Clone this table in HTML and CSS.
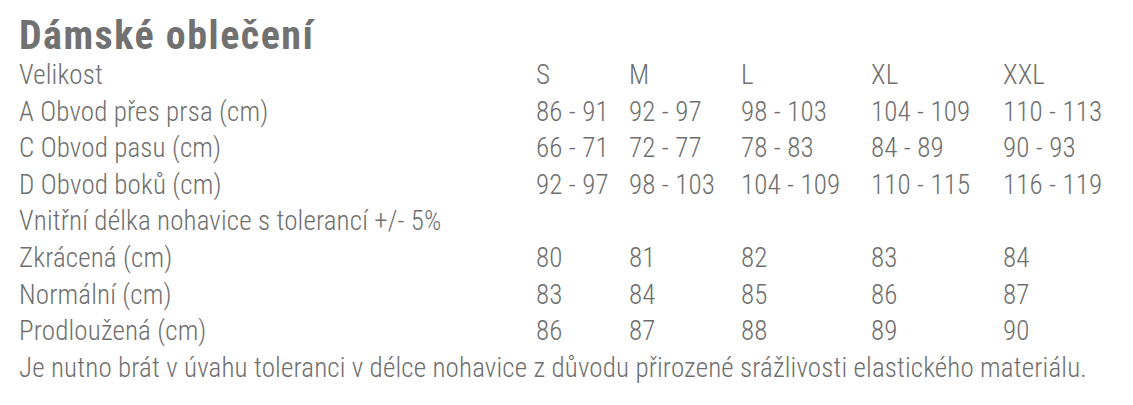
FILE: index.html
```html
<!DOCTYPE html>
<html lang="cs">
<head>
<meta charset="utf-8">
<link rel="stylesheet" href="styles.css">
</head>
<body>
<div class="sheet">
  <h1 class="title">Dámské oblečení</h1>
  <div class="grid">
    <div class="label">Velikost</div><div>S</div><div>M</div><div>L</div><div>XL</div><div>XXL</div>
    <div class="label">A Obvod přes prsa (cm)</div><div>86 - 91</div><div>92 - 97</div><div>98 - 103</div><div>104 - 109</div><div>110 - 113</div>
    <div class="label">C Obvod pasu (cm)</div><div>66 - 71</div><div>72 - 77</div><div>78 - 83</div><div>84 - 89</div><div>90 - 93</div>
    <div class="label">D Obvod boků (cm)</div><div>92 - 97</div><div>98 - 103</div><div>104 - 109</div><div>110 - 115</div><div>116 - 119</div>
    <div class="label full">Vnitřní délka nohavice s tolerancí +/- 5%</div>
    <div class="label">Zkrácená (cm)</div><div>80</div><div>81</div><div>82</div><div>83</div><div>84</div>
    <div class="label">Normální (cm)</div><div>83</div><div>84</div><div>85</div><div>86</div><div>87</div>
    <div class="label">Prodloužená (cm)</div><div>86</div><div>87</div><div>88</div><div>89</div><div>90</div>
    <div class="label full">Je nutno brát v úvahu toleranci v délce nohavice z důvodu přirozené srážlivosti elastického materiálu.</div>
  </div>
</div>
</body>
</html>
```
FILE: styles.css
```css
html, body {
  margin: 0;
  padding: 0;
  background: #ffffff;
}
.sheet {
  padding: 14px 0 0 19px;
  color: #6e6e6e;
  font-family: "Roboto Condensed", "DejaVu Sans Condensed", Roboto, "Liberation Sans", sans-serif;
}
.title {
  margin: 0;
  font-size: 40px;
  line-height: 43px;
  font-weight: 700;
  color: #717171;
  letter-spacing: 1.5px;
}
.grid {
  display: grid;
  grid-template-columns: 517px 93px 112px 130px 132px auto;
  font-size: 27px;
  font-weight: 300;
  line-height: 36.6px;
  letter-spacing: 0.15px;
  white-space: nowrap;
}
.full {
  grid-column: 1 / -1;
}
```
